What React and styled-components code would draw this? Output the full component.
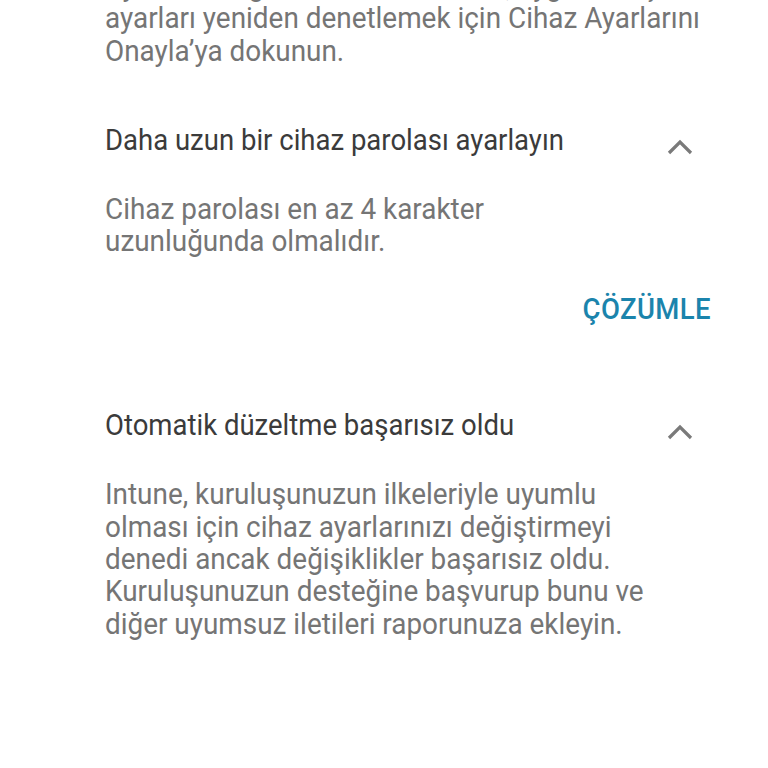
import React from "react";
import styled, { css, createGlobalStyle } from "styled-components";

const Global = createGlobalStyle`
  html, body { margin: 0; padding: 0; background: #ffffff; }
  body { font-family: Roboto, "Noto Sans", "Liberation Sans", sans-serif; overflow: hidden; }
`;

const narrow = (k) => css`
  transform: scaleX(${k});
  white-space: nowrap;
`;

const Page = styled.div`
  width: 768px;
  height: 768px;
  overflow: hidden;
  background: #fff;
  padding: 0 57px 0 105px;
  box-sizing: border-box;
  margin-top: -30px;
`;

const Paragraph = styled.p`
  ${narrow(0.93)};
  transform-origin: left center;
  margin: 0;
  font-size: 30px;
  line-height: 32.3px;
  color: #757575;
`;

const Section = styled.section`
  margin-top: ${(p) => p.$top}px;
`;

const Header = styled.div`
  display: flex;
  align-items: center;
  justify-content: space-between;
  padding-right: 18px;
`;

const Title = styled.h3`
  ${narrow(0.917)};
  transform-origin: left center;
  margin: 0;
  font-size: 30px;
  font-weight: 400;
  line-height: 32px;
  color: #3b3b3b;
`;

const Chevron = styled.svg`
  width: 26px;
  height: 16px;
  margin-top: 14px;
  flex: none;
`;

const BodyText = styled(Paragraph)`
  margin-top: 37px;
`;

const Actions = styled.div`
  display: flex;
  justify-content: flex-end;
  margin-top: 31px;
`;

const ActionButton = styled.button`
  ${narrow(0.917)};
  transform-origin: right center;
  border: none;
  background: none;
  padding: 0;
  height: 40px;
  font-family: inherit;
  font-size: 30px;
  font-weight: 500;
  color: #1b84ac;
  letter-spacing: 0.4px;
  cursor: pointer;
`;

const Up = () => (
  <Chevron viewBox="0 0 26 16">
    <path d="M2 14 L13 3 L24 14" fill="none" stroke="#7a7a7a" strokeWidth="3.2" />
  </Chevron>
);

export default function App() {
  return (
    <>
      <Global />
      <Page>
        <Paragraph>
          Ayarlarınızı güncelledikten sonra, uygunluk için
          <br />
          ayarları yeniden denetlemek için Cihaz Ayarlarını
          <br />
          Onayla’ya dokunun.
        </Paragraph>
        <Section $top={57}>
          <Header>
            <Title>Daha uzun bir cihaz parolası ayarlayın</Title>
            <Up />
          </Header>
          <BodyText>
            Cihaz parolası en az 4 karakter
            <br />
            uzunluğunda olmalıdır.
          </BodyText>
          <Actions>
            <ActionButton>ÇÖZÜMLE</ActionButton>
          </Actions>
        </Section>
        <Section $top={81}>
          <Header>
            <Title>Otomatik düzeltme başarısız oldu</Title>
            <Up />
          </Header>
          <BodyText>
            Intune, kuruluşunuzun ilkeleriyle uyumlu
            <br />
            olması için cihaz ayarlarınızı değiştirmeyi
            <br />
            denedi ancak değişiklikler başarısız oldu.
            <br />
            Kuruluşunuzun desteğine başvurup bunu ve
            <br />
            diğer uyumsuz iletileri raporunuza ekleyin.
          </BodyText>
        </Section>
      </Page>
    </>
  );
}
